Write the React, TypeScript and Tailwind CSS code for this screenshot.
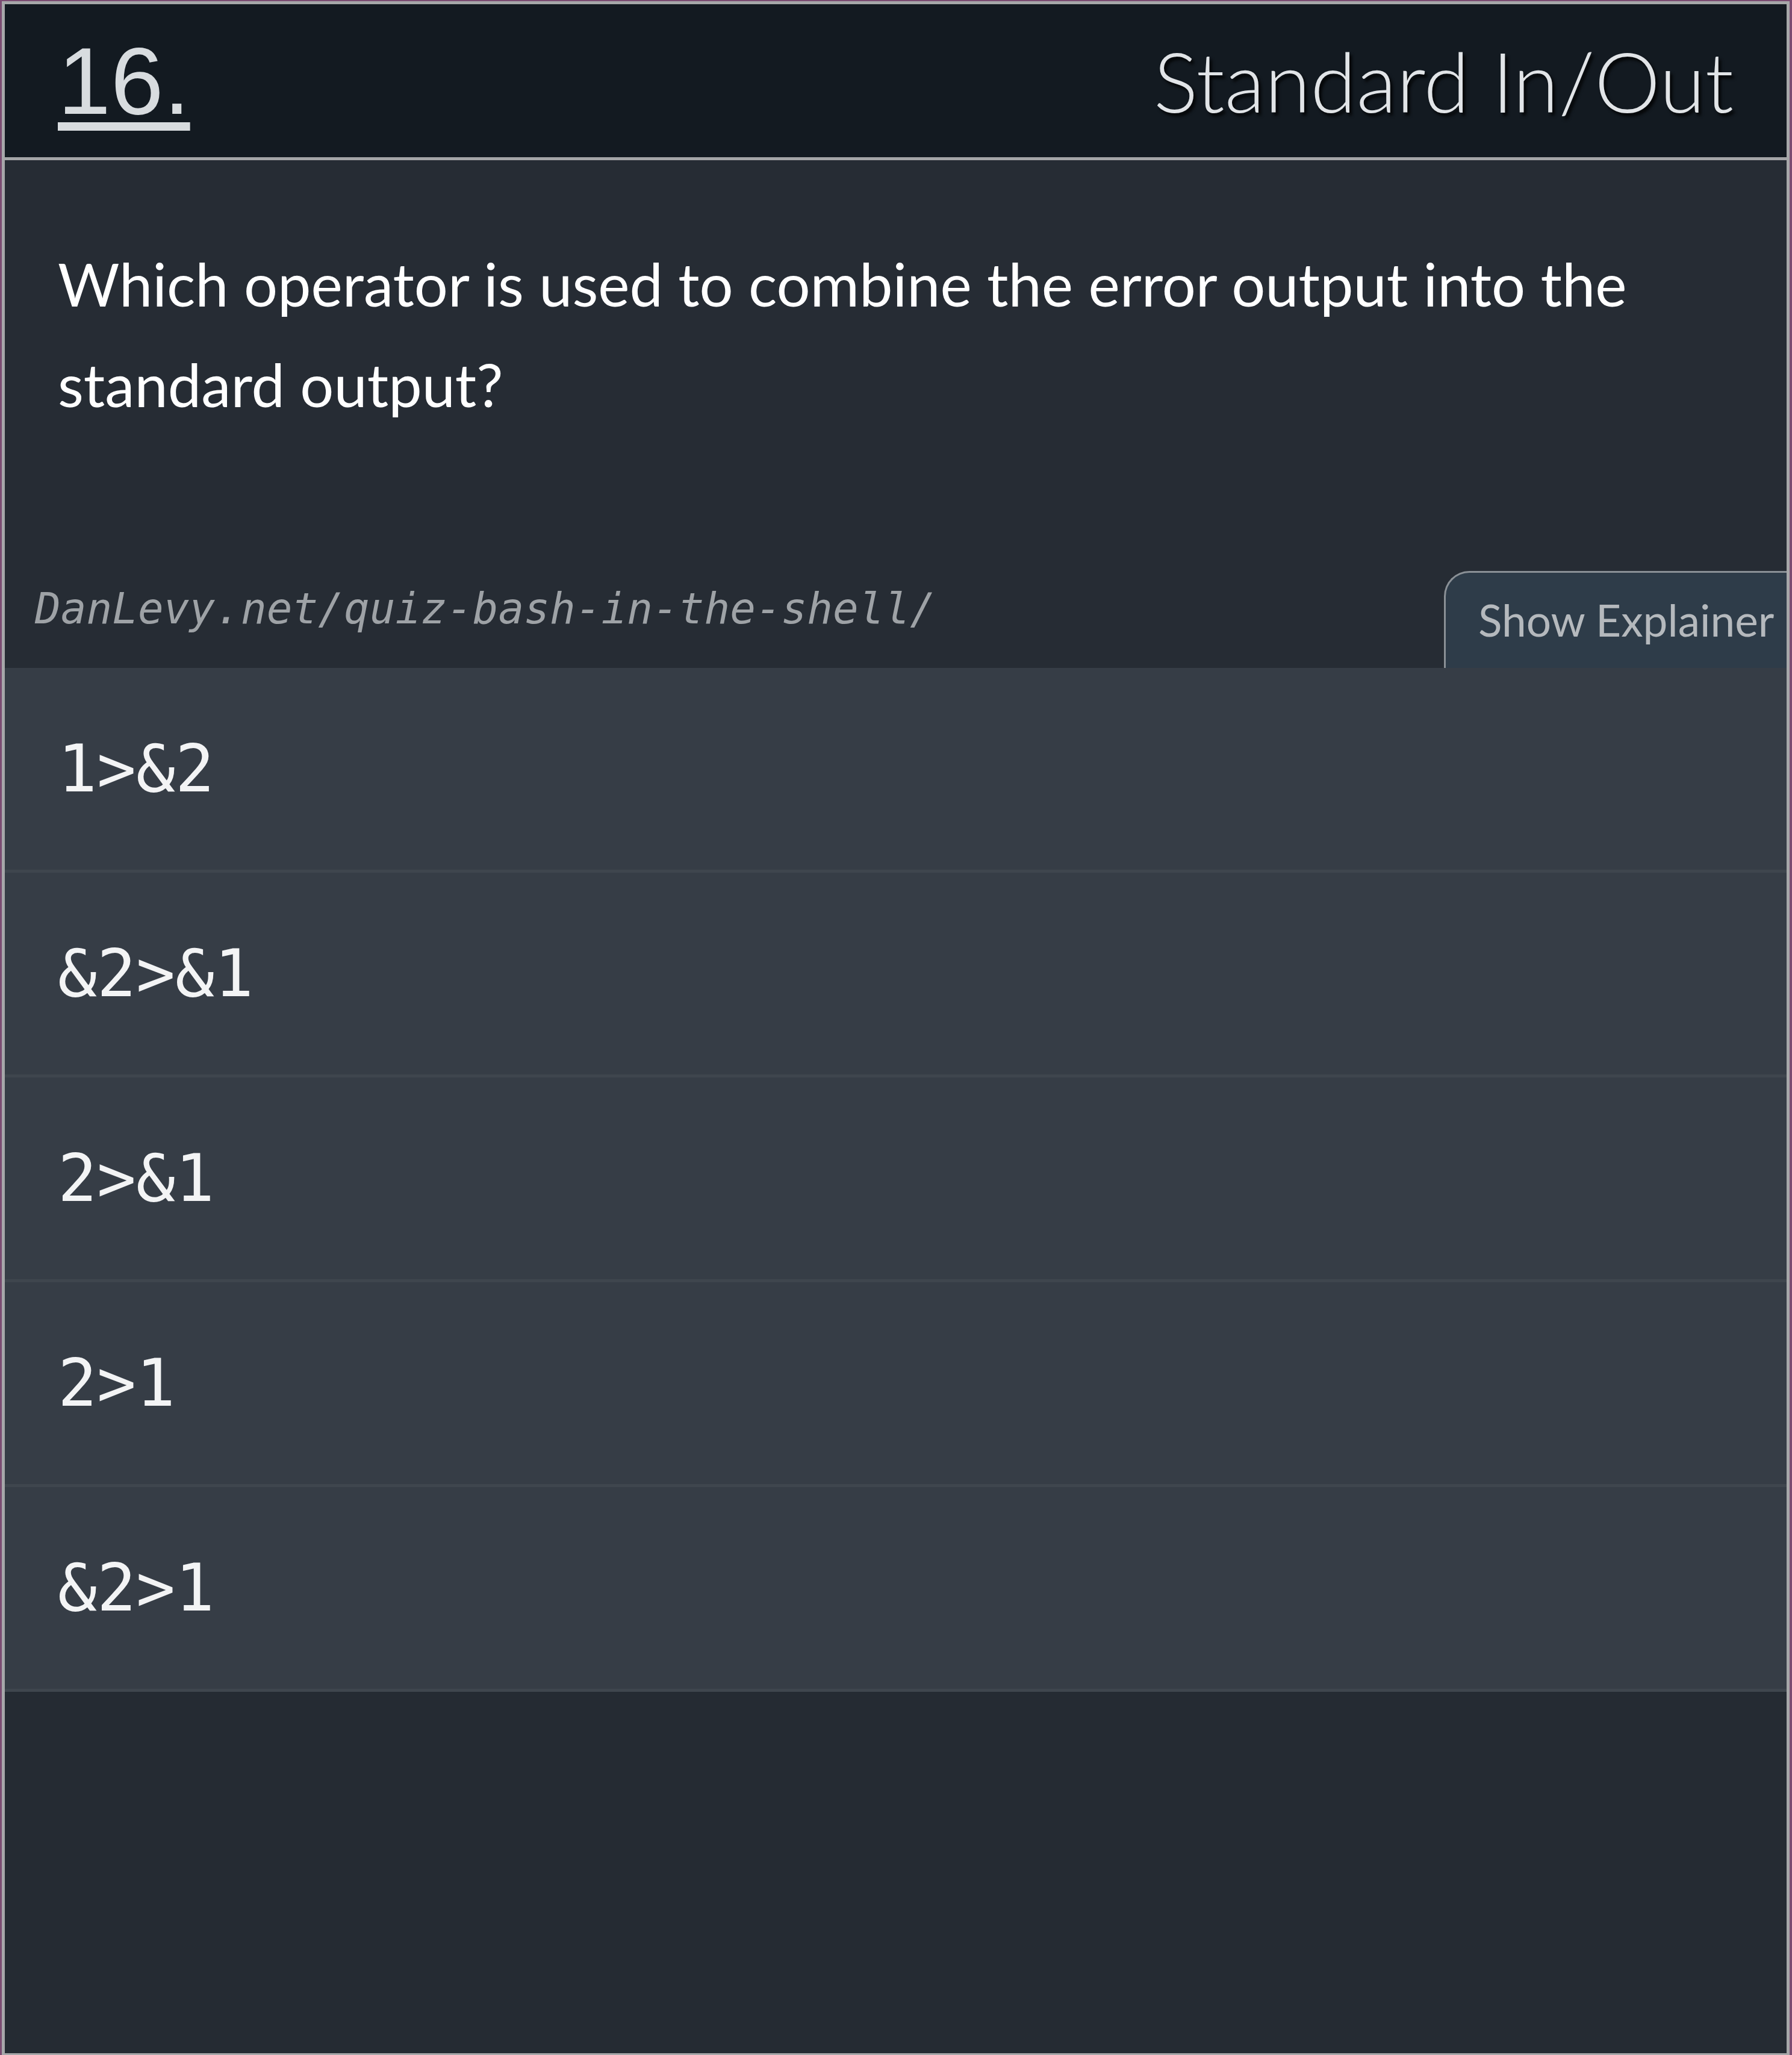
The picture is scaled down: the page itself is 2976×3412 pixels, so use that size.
import React from 'react';

// answer options, rendered in order
const answers = ['1>&2', '&2>&1', '2>&1', '2>1', '&2>1'];

function AnswerRow({ label }: { label: string }) {
  return (
    <button className="flex h-[340px] w-full items-center border-b-[5px] border-[#3f464e] bg-[#363d46] pl-[88px] text-left">
      <span className="font-['DejaVu_Sans_Mono',monospace] text-[108px] leading-none text-[#f3f4f5]">{label}</span>
    </button>
  );
}

export default function App() {
  return (
    <div className="h-[3412px] w-full border-l-[3px] border-r-[4px] border-t-2 border-[#7b4c72] bg-[#252b33]">
      <div className="flex h-full flex-col border-x-[5px] border-t-[5px] border-b-[3px] border-[#a6a7a9]">
        {/* header */}
        <header className="flex h-[259px] shrink-0 items-center justify-between border-b-[5px] border-[#a4a5a7] bg-[#131a21] px-[88px]">
          <a className="font-['Liberation_Sans',sans-serif] text-[158px] leading-none text-[#d8dcdf] underline decoration-[14px] underline-offset-[14px]">
            16.
          </a>
          <h2 className="font-['Lato',sans-serif] text-[138px] font-light leading-none text-[#e1e4e7] [text-shadow:4px_5px_5px_rgba(0,0,0,0.85)]">
            Standard In/Out
          </h2>
        </header>

        {/* question */}
        <section className="flex h-[843px] shrink-0 flex-col bg-[#262c34]">
          <p className="px-[88px] pt-[121px] font-['Lato',sans-serif] text-[99px] leading-[167px] text-white">
            Which operator is used to combine the error output into the standard output?
          </p>
          <div className="mt-auto flex items-end justify-between">
            <span className="mb-[63px] pl-[50px] font-['DejaVu_Sans_Mono',monospace] text-[71px] italic leading-none text-[#9ea2a6]">
              DanLevy.net/quiz-bash-in-the-shell/
            </span>
            <button className="flex h-[161px] w-[569px] items-center rounded-tl-[42px] border-l-[3px] border-t-[3px] border-[#8a9096] bg-[#2e3c49] pl-[54px] font-['Lato',sans-serif] text-[73px] text-[#b5b9bd]">
              Show Explainer
            </button>
          </div>
        </section>

        {/* answers */}
        <div className="flex shrink-0 flex-col">
          {answers.map((a) => (
            <AnswerRow key={a} label={a} />
          ))}
        </div>

        <div className="flex-1 bg-[#252b33]" />
      </div>
    </div>
  );
}
